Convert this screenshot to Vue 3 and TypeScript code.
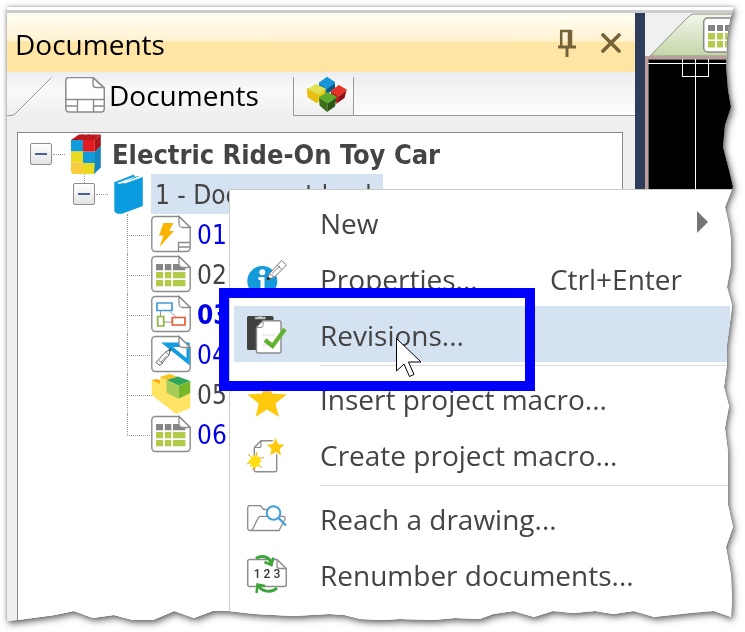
<script setup lang="ts">
import { computed } from 'vue'

interface TreeDocument {
  label: string
  icon: string
  tone: 'link' | 'plain'
  open?: boolean
}

interface MenuEntry {
  label: string
  icon?: string
  shortcut?: string
  submenu?: boolean
  active?: boolean
  divider?: boolean
}

const documents: TreeDocument[] = [
  { label: '01', icon: 'doc-bolt', tone: 'link' },
  { label: '02', icon: 'doc-table', tone: 'plain' },
  { label: '03', icon: 'doc-scheme', tone: 'link', open: true },
  { label: '04', icon: 'doc-drawing', tone: 'link' },
  { label: '05', icon: 'brick', tone: 'plain' },
  { label: '06', icon: 'doc-table', tone: 'link' },
]

const menu: MenuEntry[] = [
  { label: 'New', submenu: true },
  { label: 'Properties...', icon: 'info', shortcut: 'Ctrl+Enter' },
  { label: 'Revisions...', icon: 'revisions', active: true, divider: true },
  { label: 'Insert project macro...', icon: 'star' },
  { label: 'Create project macro...', icon: 'create-macro', divider: true },
  { label: 'Reach a drawing...', icon: 'reach' },
  { label: 'Renumber documents...', icon: 'renumber' },
]

// Torn paper outline: [inset from the right edge, distance from the top]
const rightTear: [number, number][] = [
  [0, 0], [2, 6], [4, 12], [7, 31], [8, 59], [6, 83], [3, 100], [9, 118], [11, 140],
  [5, 163], [1, 180], [9, 200], [5, 218], [3, 233], [3, 258], [7, 280], [2, 298], [3, 308],
  [7, 338], [7, 358], [10, 380], [5, 399], [9, 421], [6, 445], [6, 498], [1, 520], [8, 540],
  [3, 568], [2, 593], [3, 610],
]
// [percentage across, inset from the bottom edge]
const bottomTear: [number, number][] = [
  [97.2, 10], [94, 8], [89, 4], [86.2, 10], [83.4, 7], [80.9, 10], [77.9, 8], [75.1, 10],
  [72.5, 4], [69.7, 10], [66.9, 7], [65, 2], [61.6, 3], [58.6, 1], [54, 2], [51.6, 1],
  [48.6, 2], [46.4, 6], [44.4, 7], [39.3, 5], [34.1, 7], [30.4, 10], [28.3, 10], [25.7, 3],
  [23, 10], [20.1, 1], [17.3, 1], [14.7, 6], [11.8, 3], [9.2, 10], [6.6, 6], [1.5, 1], [0, 0],
]

const tornEdge = computed(() => {
  const points = [
    '0 0',
    ...rightTear.map(([inset, y]) => `calc(100% - ${inset}px) ${y}px`),
    ...bottomTear.map(([x, inset]) => `${x}% calc(100% - ${inset}px)`),
  ]
  return `polygon(${points.join(', ')})`
})
</script>

<template>
  <div class="page">
    <svg class="sprites" aria-hidden="true">
      <symbol id="doc-outline" viewBox="0 0 40 40">
        <path d="M5 2.5H28L39.2 13.5V34a3.5 3.5 0 0 1-3.5 3.5H4.3A3.5 3.5 0 0 1 .8 34V6A3.5 3.5 0 0 1 4.3 2.5Z" fill="#fff" stroke="#8b8b8b" stroke-width="1.4" />
      </symbol>
      <symbol id="doc-fold" viewBox="0 0 40 40">
        <path d="M28 2.5L39.2 13.5H32a4 4 0 0 1-4-4Z" fill="#fff" stroke="#8b8b8b" stroke-width="1.3" />
      </symbol>
      <symbol id="doc-bolt" viewBox="0 0 40 40">
        <use href="#doc-outline" /><use href="#doc-fold" />
        <path d="M12.5 9H22.5L18 17H23L8.5 33L12.5 21.5H8Z" fill="#fab400" />
        <path d="M39 28.5H27.5V37.5M27.5 33H39" fill="none" stroke="#8b8b8b" stroke-width="1.3" />
      </symbol>
      <symbol id="doc-table" viewBox="0 0 40 40">
        <use href="#doc-outline" />
        <path d="M5 10h7v6.3H5zM13.8 10h6.5v6.3h-6.5zM22 10h12.4v6.3H22z" fill="#858585" />
        <path d="M5 18h7v6.3H5zM13.8 18h6.5v6.3h-6.5zM22 18h12.4v6.3H22zM5 26h7v6.3H5zM13.8 26h6.5v6.3h-6.5zM22 26h12.4v6.3H22z" fill="#b1cb4b" />
        <use href="#doc-fold" />
      </symbol>
      <symbol id="doc-scheme" viewBox="0 0 40 40">
        <use href="#doc-outline" /><use href="#doc-fold" />
        <path d="M9.5 17V22M18.5 17L25 23M13 28H21" stroke="#999" fill="none" />
        <g fill="#fff" stroke-width="1.7">
          <path d="M6 9H21V16.5H6Z" stroke="#459bd4" />
          <path d="M6.7 22.5H12.7V32H6.7Z" stroke="#8ab63c" />
          <path d="M21.3 23.5H34V31H21.3Z" stroke="#ea5a34" />
        </g>
      </symbol>
      <symbol id="doc-drawing" viewBox="0 0 40 40">
        <use href="#doc-outline" />
        <path fill-rule="evenodd" d="M10 8.5H38.7V31.5ZM22 13L35.5 24V13Z" fill="#139fdf" />
        <use href="#doc-fold" />
        <path d="M5 28.5L14.5 18L19.5 15L18 21L9 31.5Z" fill="#fff" stroke="#666" />
        <path d="M8 26.5L12 30M14.5 18L18 21M10 28L15 22.5" fill="none" stroke="#777" stroke-width=".9" />
        <path d="M17.5 16.5L20 14.5L19 18Z" fill="#333" />
      </symbol>
      <symbol id="brick" viewBox="0 0 40 40">
        <path d="M.7 6.3L9 10V3L16 6V18L28 25L39.3 19V34L25 40L.7 21Z" fill="#ffe463" />
        <path d="M.7 6.3L5 5L9 6V10Z" fill="#f8ae00" />
        <path d="M9 3L18 0L26.5 2.5L16 6Z" fill="#fcc21e" />
        <path d="M15.5 6L27 2.5L39.3 7L27.5 11.5Z" fill="#2ea45d" />
        <path d="M15.5 6L27.5 11.5V25L15.5 18.5Z" fill="#a5cc57" />
        <path d="M27.5 11.5L39.3 7V19L27.5 25Z" fill="#77b729" />
      </symbol>
      <symbol id="project" viewBox="0 0 30 40">
        <path d="M0 6L8 .5H29.8L23.8 6Z" fill="#c3171e" />
        <path d="M12 .5L4 6M18 .5L12 6" stroke="#a5131a" />
        <path d="M23.8 6L29.8 .5V12L23.8 18Z" fill="#a8151c" />
        <path d="M23.8 18L29.8 12V33.5L23 40V18Z" fill="#1584bf" />
        <path d="M0 6H12V17.5H0ZM12 17.5H23.8V29H12Z" fill="#129bdb" />
        <path d="M12 6H23.8V17.5H12Z" fill="#e31b23" />
        <path d="M0 17.5H12V28.5H0ZM12 29H23.8L23 40H12Z" fill="#eadb22" />
        <path d="M0 28.5H12V40H2L0 38Z" fill="#f8cd3d" />
      </symbol>
      <symbol id="book" viewBox="0 0 30 40">
        <path d="M.3 8.2L20 .5L21 3L7.5 8.5L11 9.5L28.8 3V32L8 39.7Q2 40.5.3 37Z" fill="#0b9bdf" />
        <path d="M3 9L20.5 2.7V5L9 9Q5 10.5 3 9Z" fill="#fff" />
        <path d="M22 2.5L26 2L11 8Z" fill="#0b9bdf" />
      </symbol>
      <symbol id="doc-page" viewBox="0 0 40 36">
        <path d="M4 .5H28L39.3 11V32a3 3 0 0 1-3 3H4a3.2 3.2 0 0 1-3.2-3V3A3 3 0 0 1 4 .5Z" fill="#fff" stroke="#8b8b8b" stroke-width="1.5" />
        <path d="M28 .5V7.5a3 3 0 0 0 3 3H39ZM1 22.5H39M1 29H12.5M28.5 29H39M12.5 22.5V35M28.5 22.5V35" fill="none" stroke="#8b8b8b" stroke-width="1.4" />
      </symbol>
      <symbol id="cubes" viewBox="0 0 40 36">
        <path d="M12 6L20 11V17L12 12Z" fill="#087bb3" /><path d="M28 6L20 11V17L28 12Z" fill="#075885" />
        <path d="M20 .3L28 5.5L20 11.5L12 6Z" fill="#1696d8" stroke="#1696d8" stroke-linejoin="round" />
        <path d="M.5 11.5L12 17L10 26L1 20Z" fill="#e8bd13" stroke="#e8bd13" stroke-linejoin="round" /><path d="M11 17L18.5 12V20L10 26Z" fill="#eccb14" />
        <path d="M9 7.5L18.5 12L11 17L1.5 12Z" fill="#dfe052" stroke="#dfe052" stroke-linejoin="round" />
        <path d="M32 19L39.5 13.5L37.5 21L29 27Z" fill="#8b1114" /><path d="M24 14L32 19L30 26L24 21Z" fill="#bd1c1c" />
        <path d="M32 8.5L39.5 13L32 19L24 14Z" fill="#e63329" stroke="#e63329" stroke-linejoin="round" />
        <path d="M12 20.5L21 26L20 35L12.5 28.5Z" fill="#3e701b" /><path d="M21 26L29.5 20.5L28 29.5L20 35Z" fill="#2d5517" />
        <path d="M20.5 15.5L29.5 20L21 26L12 20.5Z" fill="#60aa2c" stroke="#60aa2c" stroke-linejoin="round" />
      </symbol>
      <symbol id="info" viewBox="0 0 40 40">
        <circle cx="15.3" cy="23" r="15" fill="#149adb" />
        <circle cx="15.3" cy="14.3" r="3" fill="#fff" />
        <path d="M11.5 19H17.5V34H13.5V22H11.5Z" fill="#fff" />
        <path d="M19.8 22L22.5 15.5L34.5 2.5L39.5 7L27.5 19Z" fill="#fff" stroke="#777" />
        <path d="M30 7L35 11.5M25 15.5L33 8M22.5 15.5L27.5 19" fill="none" stroke="#777" stroke-width=".9" />
        <path d="M19.5 22.3L21 18.5L23.8 21Z" fill="#222" />
      </symbol>
      <symbol id="revisions" viewBox="0 0 40 40">
        <rect x="0" y="2" width="26.5" height="34" rx="1.5" fill="#404040" />
        <path d="M8 5V3H11.5A2 2 0 0 1 15 3H18.5V5Z" fill="#ddd" stroke="#888" stroke-width=".8" />
        <path d="M16 6.7H32A2 2 0 0 1 34 8.7V37A2 2 0 0 1 32 39H11.5A2 2 0 0 1 9.5 37V13.5Z" fill="#fff" stroke="#8b8b8b" stroke-width="1.4" />
        <path d="M16 6.7V11.5a2 2 0 0 1-2 2H9.5Z" fill="#fff" stroke="#8b8b8b" />
        <path d="M15 21H28M15 31H28" stroke="#ddd" />
        <path d="M18 26L25.5 32L38 15" fill="none" stroke="#62b32e" stroke-width="4.2" />
      </symbol>
      <symbol id="star" viewBox="0 -2 40 40">
        <path d="M20 0L25.2 13.5L39.7 14.4L28.5 23.5L32 37L20 29.5L8.5 37L11.8 23.5L.4 14.4L15 13.5Z" fill="#ffc90e" />
      </symbol>
      <symbol id="create-macro" viewBox="0 -2 40 40">
        <path d="M14 4.7H28A1.7 1.7 0 0 1 29.7 6.4V34A1.7 1.7 0 0 1 28 35.7H9A1.7 1.7 0 0 1 7.3 34V11.5Z" fill="#fff" stroke="#8b8b8b" stroke-width="1.4" />
        <path d="M14 4.7V10a1.5 1.5 0 0 1-1.5 1.5H7.3" fill="none" stroke="#8b8b8b" stroke-width="1.2" />
        <path d="M28.6 2L31.2 8.1L37.3 8.7L32.7 13L34 19.2L28.6 16L23.2 19.2L24.5 13L19.9 8.7L26 8.1Z" fill="#ffc90e" stroke="#fff" stroke-width="3" paint-order="stroke" />
        <path d="M8 25L1 18M8 25L10 16M8 25L17 21M8 25L15 32M8 25L6 34M8 25L0 28" stroke="#e8a814" />
        <path d="M8.2 18L9.7 21L13 20L12 23L15 25.5L12 27.5L13 31L9.7 30L8 33L6 30L3 31L4 27.5L1 25.5L4 23L3 20L6.4 21Z" fill="#ffdf0b" />
      </symbol>
      <symbol id="reach" viewBox="0 -2 40 40">
        <path d="M3 30.5A2.3 2.3 0 0 1 .7 28V7.7A2 2 0 0 1 2.7 5.7H13.5L16.5 9.5H20M3 30.5H32L38 19A2 2 0 0 0 36 16.3H14A3 3 0 0 0 11 18.3L6 28.5A3 3 0 0 1 3 30.5" fill="#fff" stroke="#8b8b8b" stroke-width="1.3" />
        <circle cx="26.5" cy="13" r="6.8" fill="#fff" stroke="#43a0d9" stroke-width="2" />
        <path d="M31.5 18L39 25.5" stroke="#43a0d9" stroke-width="2.3" />
      </symbol>
      <symbol id="renumber" viewBox="0 -2 40 40">
        <path d="M2.7 3.5H30L39.3 12.5V28.5A2 2 0 0 1 37.3 30.5H2.7A2 2 0 0 1 .7 28.5V5.5A2 2 0 0 1 2.7 3.5Z" fill="#fff" stroke="#8b8b8b" stroke-width="1.5" />
        <path d="M30 3.5V10a2.5 2.5 0 0 0 2.5 2.5H39" fill="none" stroke="#8b8b8b" stroke-width="1.3" />
        <text x="20" y="21.5" text-anchor="middle" font-family="Roboto, sans-serif" font-size="12" font-weight="500" fill="#333">1 2 3</text>
        <path d="M9 2.5C14-1 22 0 24 7M30 32C25 37 15 36 11.500 30" fill="none" stroke="#3ea53a" stroke-width="3" />
        <path d="M17.5 6L24.5 9L26.500 1.500M9.500 37L10.500 28.500L18 30" fill="none" stroke="#3ea53a" stroke-width="2.5" />
      </symbol>
    </svg>

    <div class="sheet-shadow">
      <main class="sheet" :style="{ clipPath: tornEdge }">
        <div class="top-edge"></div>
        <div class="workspace">
          <section class="panel" aria-label="Documents">
            <header class="titlebar">
              <h1>Documents</h1>
              <button type="button" class="tool" aria-label="Pin panel">
                <svg width="20" height="28" viewBox="0 0 20 28" fill="none" stroke="#756239">
                  <path d="M4.200 18V2H14" stroke-width="2.500" /><path d="M13 1V18" stroke-width="4.500" />
                  <path d="M1 18H19M10 18V28" stroke-width="3" />
                </svg>
              </button>
              <button type="button" class="tool" aria-label="Close panel">
                <svg width="20" height="20" viewBox="0 0 20 20" fill="none" stroke="#756239" stroke-width="3.6" stroke-linecap="round">
                  <path d="M2 2L18 18M18 2L2 18" />
                </svg>
              </button>
            </header>

            <nav class="tabs">
              <svg class="slant" width="45" height="39" viewBox="0 0 45 39" fill="none" stroke="#999" aria-hidden="true">
                <path d="M0 38.5H4Q7 38.5 9 36L44.5 .5" />
              </svg>
              <button type="button" class="tab current">
                <svg width="40" height="36"><use href="#doc-page" /></svg>
                <span>Documents</span>
              </button>
              <button type="button" class="tab other" aria-label="Components">
                <svg width="40" height="36"><use href="#cubes" /></svg>
              </button>
              <div class="tab-rest"></div>
            </nav>

            <div class="tree-wrap">
              <ul class="tree">
                <li>
                  <div class="row root">
                    <button type="button" class="expander" aria-label="Collapse project"></button>
                    <span class="dots"></span>
                    <svg class="tree-icon" width="30" height="40"><use href="#project" /></svg>
                    <span class="label">Electric Ride-On Toy Car</span>
                  </div>
                  <ul class="books">
                    <li>
                      <div class="row book">
                        <button type="button" class="expander" aria-label="Collapse book"></button>
                        <span class="dots"></span>
                        <svg class="tree-icon" width="30" height="40"><use href="#book" /></svg>
                        <span class="label">1 - Document book</span>
                      </div>
                      <ul class="documents">
                        <li v-for="doc in documents" :key="doc.label" class="row">
                          <svg width="40" height="40" aria-hidden="true"><use :href="`#${doc.icon}`" /></svg>
                          <span class="label" :class="[doc.tone, { open: doc.open }]">{{ doc.label }}</span>
                        </li>
                      </ul>
                    </li>
                  </ul>
                </li>
              </ul>
            </div>
          </section>

          <section class="drawing" aria-label="Drawing">
            <div class="drawing-tab">
              <svg width="100" height="43" viewBox="0 0 100 43" aria-hidden="true">
                <defs>
                  <linearGradient id="tab-green" x1="0" y1="0" x2="0" y2="1">
                    <stop offset="0" stop-color="#f3f6ec" /><stop offset="1" stop-color="#c3d6a8" />
                  </linearGradient>
                </defs>
                <path d="M5 43L43 4Q46 1 50 1H100V43Z" fill="url(#tab-green)" stroke="#8c9484" />
                <rect x="58.7" y="5" width="46" height="34" rx="4" fill="#fff" stroke="#888" stroke-width="1.5" />
                <path d="M63 12h7v6h-7zM72 12h6v6h-6zM80 12h12v6H80z" fill="#858585" />
                <path d="M63 20h7v6.5h-7zM72 20h6v6.5h-6zM80 20h12v6.5H80zM63 28h7v6.5h-7zM72 28h6v6.5h-6zM80 28h12v6.5H80z" fill="#b1cb4b" />
              </svg>
            </div>
            <div class="canvas">
              <svg width="100" height="400" viewBox="0 0 100 400" fill="none" stroke="#fff" shape-rendering="crispEdges" aria-hidden="true">
                <path d="M0 4.5H100M47.5 0V400M34.5 0V17.5H60.5V0" />
              </svg>
            </div>
          </section>
        </div>

        <ul class="menu">
          <li v-for="entry in menu" :key="entry.label" :class="{ divided: entry.divider }">
            <button type="button" class="entry" :class="{ active: entry.active }">
              <span class="entry-icon">
                <svg v-if="entry.icon" width="40" height="40" aria-hidden="true"><use :href="`#${entry.icon}`" /></svg>
              </span>
              <span class="entry-text">{{ entry.label }}</span>
              <span class="entry-text">{{ entry.shortcut }}</span>
              <span class="entry-more">
                <svg v-if="entry.submenu" width="12" height="22" viewBox="0 0 12 22" aria-hidden="true"><path d="M0 0L11 11L0 22Z" fill="#757575" /></svg>
              </span>
            </button>
          </li>
        </ul>

        <div class="callout"></div>
        <svg class="pointer" width="27" height="40" viewBox="0 0 27 40" aria-hidden="true">
          <path d="M.5 .5V33L8 26L13.5 38.5L18 36.5L12.5 24H25Z" fill="#fff" stroke="#000" />
        </svg>
      </main>
    </div>
  </div>
</template>

<style>
body {
  background: #fff;
}
</style>

<style scoped>
* {
  box-sizing: border-box;
}

.page {
  display: flex;
  min-height: 100vh;
  padding: 7px 11px 11px 7px;
  overflow: hidden;
  font: 28px/40px "Open Sans", "Noto Sans", sans-serif;
  color: #444;
}

.sprites {
  display: none;
}

ul {
  margin: 0;
  padding: 0;
  list-style: none;
}

button {
  padding: 0;
  border: 0;
  background: none;
  color: inherit;
  font: inherit;
}

svg {
  display: block;
  flex: none;
}

.sheet-shadow {
  display: flex;
  flex: 1;
  min-width: 0;
  filter: drop-shadow(0 0 2px rgba(0, 0, 0, 0.3)) drop-shadow(2px 3px 3px rgba(0, 0, 0, 0.5));
}

.sheet {
  position: relative;
  display: flex;
  flex: 1;
  flex-direction: column;
  min-width: 0;
  background: #fff;
}

.top-edge {
  height: 6px;
  border-bottom: 3px solid #cdcdcd;
}

.workspace {
  display: flex;
  flex: 1;
}

.panel {
  display: flex;
  flex: 1;
  flex-direction: column;
  min-width: 0;
  background: #efefef;
}

.titlebar {
  display: flex;
  align-items: center;
  gap: 24px;
  height: 59px;
  padding: 0 14px 0 8px;
  background: linear-gradient(#fffdf4 0, #fff2d0 28px, #ffe6a6 29px, #ffe5a4 100%);
}

.titlebar h1 {
  flex: 1;
  margin: 0;
  padding-top: 3px;
  color: #000;
  font: inherit;
}

.tabs {
  display: flex;
  height: 44px;
  padding-top: 5px;
  background: linear-gradient(#ededed, #fafafa 40%, #efefef);
}

.tab {
  display: flex;
  color: #000;
  line-height: 36px;
}

.current {
  flex: none;
  width: 241px;
  gap: 4px;
  padding-left: 13px;
}

.other {
  width: 61px;
  padding-left: 13px;
  border: 1px solid #999;
  border-top: 0;
}

.tab-rest {
  flex: 1;
  margin-top: -5px;
  border-bottom: 1px solid #999;
  background: linear-gradient(#ededed, #fdfdfd);
}

.tree-wrap {
  display: flex;
  flex: 1;
  padding: 16px 12px 0 10px;
}

.tree {
  flex: 1;
  padding: 1px 0 24px 12px;
  border: 1px solid #858a8e;
  border-bottom: 0;
  background: #fff;
  font-family: "DejaVu Sans Condensed", "DejaVu Sans", sans-serif;
  font-size: 26px;
}

.row {
  display: flex;
  align-items: center;
  height: 40px;
  white-space: nowrap;
}

.label {
  padding-top: 2px;
  line-height: 38px;
}

.expander {
  flex: none;
  width: 22px;
  height: 22px;
  border: 1px solid #8c8c8c;
  border-radius: 2px;
  background: linear-gradient(#455f9c, #455f9c) center / 12px 2px no-repeat, linear-gradient(#fff, #e3e3e3);
}

.dots {
  width: 12px;
  margin: 0 6px 0 1px;
  border-top: 1px dotted #999;
}

.root .label {
  padding-left: 11px;
  font-size: 27px;
  font-weight: 700;
}

.books {
  position: relative;
  padding-left: 43px;
}

.books::before {
  position: absolute;
  top: 0;
  left: 54px;
  height: 9px;
  border-left: 1px dotted #999;
  content: "";
}

.book .label {
  margin-left: 7px;
  padding-right: 4px;
  padding-left: 4px;
  background: #d5e2f1;
}

.documents .row {
  position: relative;
  gap: 6px;
  padding-left: 78px;
}

.documents .row::before {
  position: absolute;
  top: 0;
  left: 54px;
  width: 24px;
  height: 21px;
  border: dotted #999;
  border-width: 0 0 1px 1px;
  content: "";
}

.documents .row:not(:last-child)::after {
  position: absolute;
  top: 21px;
  bottom: 0;
  left: 54px;
  border-left: 1px dotted #999;
  content: "";
}

.link {
  color: #0000e6;
}

.open {
  font-weight: 700;
}

.drawing {
  display: flex;
  flex-direction: column;
  width: 99px;
  border-left: 10px solid #2e3e5a;
}

.drawing-tab {
  height: 43px;
  overflow: hidden;
  background: #f0f0f0;
}

.canvas {
  flex: 1;
  overflow: hidden;
  border: solid #bd9c9c;
  border-width: 3px 0 0 3px;
  background: #000;
  box-shadow: inset 1px 1px #666;
}

.menu {
  position: absolute;
  top: 182px;
  right: 0;
  bottom: 0;
  left: 222px;
  padding: 4px 4px 0;
  border: solid #ccc;
  border-width: 1px 0 0 1px;
  background: #fff;
}

.divided {
  padding-bottom: 8px;
  background: linear-gradient(#ddd, #ddd) 86px calc(100% - 4px) / 100% 1px no-repeat;
}

.entry {
  display: grid;
  grid-template-columns: 86px 1fr auto 48px;
  align-items: center;
  width: 100%;
  height: 56px;
  text-align: left;
  white-space: nowrap;
}

.entry.active {
  background: #d5e2f1;
}

.entry-icon {
  padding-left: 13px;
}

.entry-text {
  padding-top: 2px;
}

.entry-more {
  padding-left: 15px;
}

.callout {
  position: absolute;
  top: 281px;
  left: 212px;
  width: 316px;
  height: 103px;
  border: 10px solid #00f;
}

.pointer {
  position: absolute;
  top: 331px;
  left: 389px;
}
</style>
